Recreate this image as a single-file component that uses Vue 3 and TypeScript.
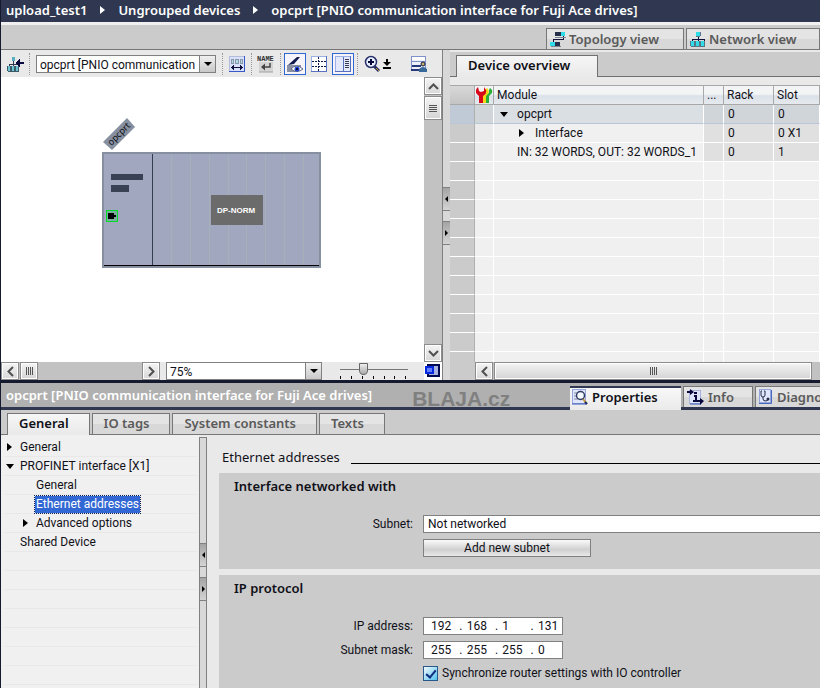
<script setup lang="ts">
import { ref } from 'vue'

interface ModuleRow {
  name: string
  rack: string
  slot: string
  level: number
  arrow: '' | 'open' | 'closed'
}

interface TreeItem {
  label: string
  level: number
  arrow: '' | 'open' | 'closed'
}

const path = ['upload_test1', 'Ungrouped devices', 'opcprt [PNIO communication interface for Fuji Ace drives]']

const modules: ModuleRow[] = [
  { name: 'opcprt', rack: '0', slot: '0', level: 0, arrow: 'open' },
  { name: 'Interface', rack: '0', slot: '0 X1', level: 1, arrow: 'closed' },
  { name: 'IN: 32 WORDS, OUT: 32 WORDS_1', rack: '0', slot: '1', level: 0, arrow: '' },
]
const emptyRows = 16

const tree: TreeItem[] = [
  { label: 'General', level: 0, arrow: 'closed' },
  { label: 'PROFINET interface [X1]', level: 0, arrow: 'open' },
  { label: 'General', level: 1, arrow: '' },
  { label: 'Ethernet addresses', level: 1, arrow: '' },
  { label: 'Advanced options', level: 1, arrow: 'closed' },
  { label: 'Shared Device', level: 0, arrow: '' },
]
const emptyTreeRows = 14
const selectedTree = ref(3)

const tabs = ['General', 'IO tags', 'System constants', 'Texts']
const activeTab = ref('General')

const slotLines = [69, 88, 107, 126, 144, 163, 182, 201]
const ticks = [1, 12, 23, 34, 45, 55, 66]

const device = ref('opcprt [PNIO communication')
const zoom = ref('75%')
const zoomLevel = ref(32)
const subnet = ref('Not networked')
const address = ref(['192', '168', '1', '131'])
const mask = ref(['255', '255', '255', '0'])
const syncRouter = ref(true)
</script>

<template>
  <div class="app">
    <header class="path">
      <template v-for="(part, i) in path" :key="part">
        <span v-if="i > 0" class="path-arrow"></span>
        <span>{{ part }}</span>
      </template>
    </header>

    <nav class="views">
      <button type="button" class="view-tab">
        <svg width="16" height="16" viewBox="0 0 16 16" shape-rendering="crispEdges">
          <path d="M3 12V8h10V5" fill="none" stroke="#10103c" stroke-width="1" />
          <rect x="5" y="1" width="6" height="4" fill="#26304a" /><rect x="11" y="1" width="4" height="4" fill="#30dce8" />
          <rect x="0" y="11" width="5" height="4" fill="#30dce8" /><rect x="5" y="11" width="5" height="4" fill="#26304a" />
          <path d="M5 6h11M1 15.500h10" stroke="#7c8490" />
        </svg>
        Topology view
      </button>
      <button type="button" class="view-tab last">
        <svg width="16" height="16" viewBox="0 0 16 16" shape-rendering="crispEdges">
          <path d="M8 5v5M2 10V8h12v2" fill="none" stroke="#10103c" />
          <rect x="6" y="1" width="4" height="4" fill="#30dce8" /><path d="M6 5h4M10 1v4" stroke="#5a7684" />
          <g fill="#30dce8"><rect x="1" y="10" width="3" height="5" /><rect x="6" y="10" width="3" height="5" /><rect x="11" y="10" width="3" height="5" /></g>
          <path d="M4.500 10v5M9.500 10v5M14.500 10v5M1 15.500h14M.5 10v5M5.500 10v5M10.500 10v5" stroke="#5a7684" />
        </svg>
        Network view
      </button>
    </nav>

    <main class="workspace">
      <section class="device-view">
        <div class="toolbar">
          <button type="button" class="tool" aria-label="Go to parent">
            <svg width="18" height="16" viewBox="0 0 18 16" shape-rendering="crispEdges">
              <path d="M6.500 4v6M2.500 10V8.500h9V10" fill="none" stroke="#303850" />
              <rect x="5" y="1" width="3" height="4" fill="#5ab0c0" />
              <g fill="#6cc4d0"><rect x="1" y="10" width="2" height="5" /><rect x="5" y="10" width="2" height="5" /><rect x="9" y="10" width="2" height="5" /></g>
              <path d="M.5 10v5M3.500 10v5M4.500 10v5M7.500 10v5M8.500 10v5M11.500 10v5M1 15.500h11" stroke="#3c5a68" />
              <path d="M8 7l5-4v3h4v2h-4v3z" fill="#08083c" />
            </svg>
          </button>
          <i class="sep"></i>
          <div class="combo device-combo">
            <select v-model="device" aria-label="Device"><option>opcprt [PNIO communication</option></select>
            <span class="combo-arrow"></span>
          </div>
          <i class="sep"></i>
          <button type="button" class="tool wide" aria-label="Module width">
            <svg width="16" height="16" viewBox="0 0 16 16" shape-rendering="crispEdges">
              <rect x="0" y="0" width="16" height="16" fill="#d8e0fa" /><path d="M.5 15V.5H15" fill="none" stroke="#b4bcdc" />
              <path d="M15.500 0v15.500H0" fill="none" stroke="#3858c8" />
              <g fill="#8898a8"><rect x="2" y="3" width="3" height="5" /><rect x="6" y="3" width="4" height="5" /><rect x="11" y="3" width="3" height="5" /></g>
              <g fill="#b0dce8"><rect x="3" y="4" width="1" height="3" /><rect x="7" y="4" width="2" height="3" /><rect x="12" y="4" width="1" height="3" /></g>
              <path d="M2 11.500h12" stroke="#10103c" /><path d="M4.500 9v5M11.500 9v5M3.500 10v3M12.500 10v3" stroke="#10103c" />
            </svg>
          </button>
          <i class="sep"></i>
          <button type="button" class="tool wide" aria-label="Show labels">
            <svg width="18" height="18" viewBox="0 0 18 18">
              <rect x="2" y="7" width="14" height="10" fill="#d4d4d4" /><path d="M2 17h14" stroke="#a0a0a0" />
              <text x="0" y="6" class="name-glyph">NAME</text>
              <path d="M13 8v4H6" fill="none" stroke="#444" stroke-width="1.500" /><path d="M8 8.500v7L4 12z" fill="#444" />
            </svg>
          </button>
          <i class="sep"></i>
          <button type="button" class="tool on" aria-label="Show addresses">
            <svg width="18" height="18" viewBox="0 0 18 18">
              <path d="M1 10h14v4l-3 3H1z" fill="#8890a4" /><path d="M2 10L11 2h3L8 9z" fill="#10184c" />
              <path d="M5 14q5-6 12 0-6 5-12 0z" fill="#fff" stroke="#606a84" /><circle cx="11" cy="14" r="2.500" fill="#1840d0" /><circle cx="11" cy="14" r="1" />
            </svg>
          </button>
          <button type="button" class="tool" aria-label="Show page breaks">
            <svg width="16" height="16" viewBox="0 0 16 16" shape-rendering="crispEdges">
              <rect width="16" height="16" fill="#fff" /><path d="M.5 15V.5H15" fill="none" stroke="#9cb0e8" /><path d="M15.500 0v15.500H0" fill="none" stroke="#5870c0" />
              <path d="M7.500 1v14" stroke="#10184c" stroke-dasharray="2 1" />
              <path d="M1 5.500h14M1 10.500h14" stroke="#10184c" stroke-dasharray="2 1" />
            </svg>
          </button>
          <button type="button" class="tool on" aria-label="Show table">
            <svg width="16" height="16" viewBox="0 0 16 16" shape-rendering="crispEdges">
              <rect width="16" height="16" fill="#e4e8fc" /><path d="M.5 15V.5H15" fill="none" stroke="#9cb0e8" /><path d="M15.500 0v15.500H0" fill="none" stroke="#5870c0" />
              <path d="M8.500 1v14" stroke="#5870c0" /><path d="M10 3.500h4M10 5.500h4M10 7.500h4M10 9.500h4M10 11.500h4" stroke="#383c50" />
            </svg>
          </button>
          <i class="sep"></i>
          <button type="button" class="tool zoom-tool" aria-label="Zoom">
            <svg width="30" height="18" viewBox="0 0 30 18">
              <path d="M10 11l5 5" stroke="#20285c" stroke-width="3" /><path d="M12 13l3 3" stroke="#c89838" />
              <circle cx="7" cy="7" r="5.500" fill="#e8f0ff" stroke="#28306a" stroke-width="1.500" /><path d="M7 4v6M4 7h6" stroke="#08083c" stroke-width="2" />
              <path d="M22 4h2v3h3l-4 4-4-4h3z" /><path d="M19 13h8" stroke="#000" stroke-width="2" />
            </svg>
          </button>
          <button type="button" class="tool save" aria-label="Save window settings">
            <svg width="16" height="16" viewBox="0 0 16 16">
              <rect x=".5" y=".5" width="14" height="14" fill="#eef0fa" stroke="#8090c8" /><rect x="1" y="1" width="13" height="3" fill="#fff" />
              <path d="M1 5.500h13" stroke="#8090c8" /><path d="M1 10h9M0 14h10" stroke="#28387c" stroke-width="2" /><circle cx="12" cy="8" r="2" fill="#c8b060" stroke="#10184c" />
              <path d="M8 16v-3q4-4 8 0v3z" fill="#386898" />
            </svg>
          </button>
        </div>

        <div class="canvas-row">
          <div class="canvas">
            <svg class="rack" width="219" height="150" viewBox="0 0 219 150">
              <path d="M1 24L25 0l8 9-23 23z" fill="#8790a0" />
              <text x="17" y="19" class="tag" transform="rotate(-45 17 16)">opcprt</text>
              <rect x="1" y="35" width="217" height="114" fill="#a2a7c0" stroke="#8690a0" stroke-width="2" />
              <g shape-rendering="crispEdges">
                <rect v-for="x in slotLines" :key="x" :x="x" y="36" width="1" height="111" fill="#a6b0b8" />
                <rect x="50" y="36" width="1" height="112" fill="#333d50" />
                <rect x="2" y="147" width="215" height="1" />
                <rect x="9" y="56" width="32" height="6" fill="#394255" />
                <rect x="9" y="67" width="18" height="7" fill="#394255" />
                <rect x="4" y="92" width="12" height="12" fill="#00dc28" /><rect x="5" y="93" width="10" height="10" fill="#7cae9c" />
                <rect x="6" y="95" width="6" height="6" /><rect x="12" y="97" width="2" height="2" />
                <rect x="109" y="77" width="52" height="30" fill="#6b6b6b" />
              </g>
              <text x="134" y="95" class="norm">DP-NORM</text>
            </svg>
          </div>
          <div class="vscroll">
            <button type="button" class="sb" aria-label="Scroll up"><svg width="11" height="7"><path d="M1 6l4.500-4.500L10 6" /></svg></button>
            <span class="thumb-v"><i></i><i></i><i></i><i></i></span>
            <button type="button" class="sb end" aria-label="Scroll down"><svg width="11" height="7"><path d="M1 1l4.500 4.500L10 1" /></svg></button>
          </div>
        </div>

        <div class="canvas-foot">
          <div class="hscroll">
            <button type="button" class="sb" aria-label="Scroll left"><svg width="7" height="11"><path d="M6 1L1.500 5.500 6 10" /></svg></button>
            <span class="thumb-h small"><i></i><i></i><i></i><i></i></span>
            <button type="button" class="sb end" aria-label="Scroll right"><svg width="7" height="11"><path d="M1 1l4.500 4.500L1 10" /></svg></button>
          </div>
          <div class="combo zoom-combo">
            <select v-model="zoom" aria-label="Zoom factor"><option>75%</option></select>
            <span class="combo-arrow"></span>
          </div>
          <div class="slider">
            <input v-model.number="zoomLevel" type="range" min="0" max="100" aria-label="Zoom slider" />
            <svg width="68" height="3" shape-rendering="crispEdges"><rect v-for="t in ticks" :key="t" :x="t - 1" width="1" height="3" /></svg>
          </div>
          <button type="button" class="tool overview" aria-label="Overview">
            <svg width="16" height="16" viewBox="0 0 16 16" shape-rendering="crispEdges">
              <rect x="3" y="2" width="11" height="11" fill="#a8b4e0" stroke="#000850" stroke-width="2" />
              <rect x="1" y="4" width="7" height="6" fill="#6080ff" stroke="#0828e0" stroke-width="2" />
            </svg>
          </button>
        </div>
      </section>

      <div class="splitter top-split"><i class="grip left"></i><i class="grip right"></i></div>

      <section class="overview-pane">
        <div class="pane-tabs"><h2>Device overview</h2></div>
        <div class="grid">
          <table>
            <colgroup><col class="c-gutter" /><col class="c-icon" /><col /><col class="c-dots" /><col class="c-rack" /><col class="c-slot" /></colgroup>
            <thead>
              <tr>
                <th></th>
                <th class="icon-cell">
                  <svg width="17" height="16" viewBox="0 0 17 16">
                    <path d="M10 7l3-1V3l1-2q3 2 2 5l-3 3v7h-3z" fill="#28b038" />
                    <path d="M7 7l2-1V3l2-2q3 3 1 6l-2 2v7H7z" fill="#f4d818" />
                    <path d="M2 0Q-1 3 0 6l3 3v7h4V9q4-2 3-6L8 0v4L5 5 3 4z" fill="#d80818" />
                  </svg>
                </th>
                <th>Module</th><th>...</th><th>Rack</th><th>Slot</th>
              </tr>
            </thead>
            <tbody>
              <tr v-for="(m, i) in modules" :key="m.name" :class="{ selected: i === 0 }">
                <td class="gutter"></td><td class="shade"></td>
                <td class="name"><span class="node" :class="'level' + m.level"><i class="arrow" :class="m.arrow"></i>{{ m.name }}</span></td>
                <td class="shade"></td><td class="shade">{{ m.rack }}</td><td class="shade">{{ m.slot }}</td>
              </tr>
              <tr v-for="n in emptyRows" :key="n"><td class="gutter"></td><td></td><td></td><td></td><td></td><td></td></tr>
            </tbody>
          </table>
        </div>
        <div class="grid-scroll">
          <div class="hscroll wide">
            <button type="button" class="sb" aria-label="Scroll table left"><svg width="7" height="11"><path d="M6 1L1.500 5.500 6 10" /></svg></button>
            <span class="thumb-h"><i></i><i></i><i></i><i></i></span>
          </div>
        </div>
      </section>
    </main>

    <section class="inspector">
      <header class="inspector-title">
        <h1>opcprt [PNIO communication interface for Fuji Ace drives]</h1>
        <span class="mark">BLAJA.cz</span>
        <nav class="inspector-tabs">
          <button type="button" class="itab props">
            <svg width="16" height="16" viewBox="0 0 16 16">
              <rect x=".5" y=".5" width="13" height="14" fill="#e0e6fc" stroke="#94a4dc" /><path d="M0 15h14" stroke="#3858b8" />
              <path d="M2 4h4M2 7h3M2 10h4" stroke="#8088a0" /><path d="M11 10l4 5" stroke="#c89828" stroke-width="2" /><path d="M13 13l2 2" stroke="#182870" stroke-width="2" />
              <circle cx="8.500" cy="6.500" r="4" fill="#f4f8ff" stroke="#303c60" stroke-width="1.500" />
            </svg>
            Properties
          </button>
          <button type="button" class="itab info">
            <svg width="17" height="16" viewBox="0 0 17 16">
              <rect x="2.500" y="1.500" width="11" height="13" fill="#dce4fa" stroke="#a8b4dc" /><path d="M3 15h11" stroke="#3858b8" />
              <path d="M0 2h3V0l4 3-4 3V4H0zM10 11h3V9l4 3-4 4v-3h-3z" fill="#08083c" /><path d="M7 7h2v5M6 12h5M7 4h3" fill="none" stroke="#08083c" stroke-width="2" />
            </svg>
            Info
          </button>
          <button type="button" class="itab">
            <svg width="14" height="16" viewBox="0 0 14 16">
              <rect x=".5" y=".5" width="11" height="13" fill="#e0e6fc" stroke="#94a4dc" /><path d="M0 14.500h12.500V1" fill="none" stroke="#4868c0" />
              <path d="M3 2H2v4q0 2 2 2t2-2V2H5M4 8v2q0 2 3 2l2-1" fill="none" stroke="#202c48" /><circle cx="9" cy="10" r="1.500" fill="#202c48" />
            </svg>
            Diagnostics
          </button>
        </nav>
      </header>

      <nav class="page-tabs">
        <button v-for="t in tabs" :key="t" type="button" :class="{ active: t === activeTab }" @click="activeTab = t">{{ t }}</button>
      </nav>

      <div class="inspector-body">
        <ul class="tree">
          <li v-for="(item, i) in tree" :key="i" :class="'indent' + item.level">
            <i class="arrow" :class="item.arrow"></i>
            <button type="button" :class="{ picked: i === selectedTree }" @click="selectedTree = i">{{ item.label }}</button>
          </li>
          <li v-for="n in emptyTreeRows" :key="'e' + n"></li>
        </ul>

        <div class="splitter bottom-split"><i class="grip left"></i><i class="grip right"></i></div>

        <form class="form" @submit.prevent>
          <h2 class="page-title">Ethernet addresses</h2>

          <section class="card">
            <h3>Interface networked with</h3>
            <div class="fields">
              <label for="subnet">Subnet:</label>
              <input id="subnet" v-model="subnet" type="text" class="subnet" />
              <button type="button" class="add">Add new subnet</button>
            </div>
          </section>

          <section class="card grow">
            <h3>IP protocol</h3>
            <div class="fields">
              <label for="ip0">IP address:</label>
              <div class="octets">
                <template v-for="(_, i) in address" :key="i">
                  <span v-if="i > 0">.</span>
                  <input :id="'ip' + i" v-model="address[i]" type="text" :aria-label="'IP address part ' + (i + 1)" />
                </template>
              </div>
              <label for="mask0">Subnet mask:</label>
              <div class="octets">
                <template v-for="(_, i) in mask" :key="i">
                  <span v-if="i > 0">.</span>
                  <input :id="'mask' + i" v-model="mask[i]" type="text" :aria-label="'Subnet mask part ' + (i + 1)" />
                </template>
              </div>
              <label class="check"><input v-model="syncRouter" type="checkbox" />Synchronize router settings with IO controller</label>
            </div>
          </section>
        </form>
      </div>
    </section>
  </div>
</template>

<style>
body {
  margin: 0;
  background: #e9e9e9;
}
</style>

<style scoped>
.app,
.app * {
  box-sizing: border-box;
}
.app {
  --title: 600 13px/18px "Noto Sans", "Open Sans", sans-serif;
  display: grid;
  grid-template-rows: 25px 25px minmax(0, 15fr) minmax(0, 14fr);
  height: 100vh;
  border-left: 1px solid #161a2e;
  overflow: hidden;
  background: #e9e9e9;
  color: #101018;
  font: 12px/18px Roboto, "Open Sans", sans-serif;
}
button,
input,
select {
  margin: 0;
  padding: 0;
  border: 0;
  border-radius: 0;
  font: inherit;
  color: inherit;
  background: none;
}
h1,
h2,
h3 {
  margin: 0;
  font: var(--title);
}
svg {
  display: block;
  flex: none;
}

.path {
  display: flex;
  align-items: center;
  gap: 13px;
  padding: 0 5px 2px;
  background: #2f3850;
  border-bottom: 3px solid #f0f0f0;
  color: #fff;
  font: var(--title);
  white-space: nowrap;
}
.path-arrow {
  border: 4px solid transparent;
  border-left: 5px solid #fff;
  border-right: 0;
}

.views {
  display: flex;
  justify-content: flex-end;
  align-items: flex-end;
  gap: 2px;
  background: #cbcbcb;
  border-bottom: 1px solid #777;
}
.view-tab {
  display: flex;
  align-items: center;
  gap: 3px;
  width: 138px;
  height: 21px;
  padding: 0 3px;
  border: 1px solid #777;
  border-bottom: 0;
  background: linear-gradient(#e4e4e4 50%, #d8d8d8 50%);
  color: #5a5a5a;
  font: var(--title);
  white-space: nowrap;
}
.view-tab.last {
  width: 134px;
}

.workspace {
  display: grid;
  grid-template-columns: minmax(0, 31fr) 8px minmax(0, 26fr);
  min-height: 0;
}
.device-view {
  display: flex;
  flex-direction: column;
  min-height: 0;
}
.toolbar {
  display: flex;
  align-items: center;
  flex: none;
  height: 27px;
  gap: 3px;
  padding: 0 13px 0 5px;
}
.tool {
  display: flex;
  align-items: center;
  justify-content: center;
  flex: none;
  width: 20px;
  height: 22px;
}
.tool.wide {
  width: 22px;
}
.tool.on {
  width: 22px;
  border: 1px solid #3068d0;
  background: #f4f4fa;
}
.tool.zoom-tool {
  width: 36px;
}
.save {
  margin-left: auto;
}
.sep {
  flex: none;
  width: 1px;
  height: 22px;
  border-left: 1px dotted #999;
}
.name-glyph {
  font: bold 7px "Liberation Mono", monospace;
  fill: #333;
}
.combo {
  display: flex;
  flex: none;
  height: 18px;
  border: 1px solid #808080;
  background: #fff;
}
.combo select {
  flex: 1;
  min-width: 0;
  padding-left: 3px;
  appearance: none;
  outline: 0;
  text-overflow: clip;
}
.combo-arrow {
  display: grid;
  place-items: center;
  width: 16px;
  border: 1px solid #808080;
  border-width: 0 0 0 1px;
  background: linear-gradient(#f0f0f0, #c8c8c8);
}
.combo-arrow::after {
  content: "";
  border: 4px solid transparent;
  border-top-color: #000;
  border-bottom: 0;
}
.device-combo {
  width: 180px;
  margin: 0 3px;
}

.canvas-row {
  display: flex;
  flex: 1;
  min-height: 0;
}
.canvas {
  position: relative;
  flex: 1;
  background: #fff;
}
.rack {
  position: absolute;
  left: 101px;
  top: 41px;
}
.tag {
  font: 9px "Open Sans", "Noto Sans", sans-serif;
  text-anchor: middle;
}
.norm {
  font: bold 8px "Liberation Sans", sans-serif;
  fill: #fff;
  text-anchor: middle;
}

.vscroll {
  display: flex;
  flex-direction: column;
  width: 18px;
  gap: 1px;
  background: #c2c2c2;
}
.hscroll {
  display: flex;
  gap: 1px;
  width: 159px;
  height: 18px;
  background: #c2c2c2;
}
.sb {
  display: grid;
  place-items: center;
  flex: none;
  width: 18px;
  height: 18px;
  border: 1px solid #8c8c8c;
  background: linear-gradient(#f4f4f4, #d8d8d8);
  box-shadow: inset 0 0 0 1px #fff;
}
.sb path {
  fill: none;
  stroke: #505050;
  stroke-width: 2;
}
.vscroll .end {
  margin-top: auto;
}
.hscroll .end {
  margin-left: auto;
}
.thumb-v,
.thumb-h {
  display: flex;
  align-items: center;
  justify-content: center;
  border: 1px solid #8c8c8c;
  background: linear-gradient(#f4f4f4, #d4d4d4);
  box-shadow: inset 0 0 0 1px #fff;
}
.thumb-v {
  flex-direction: column;
  gap: 1px;
  height: 24px;
}
.thumb-v i {
  width: 8px;
  height: 1px;
  background: #555;
}
.thumb-h {
  flex: 1;
  gap: 1px;
}
.thumb-h.small {
  flex: none;
  width: 18px;
}
.thumb-h i {
  width: 1px;
  height: 8px;
  background: #555;
}
.canvas-foot {
  display: flex;
  flex: none;
  height: 18px;
}
.zoom-combo {
  width: 156px;
  margin-left: 6px;
}
.slider {
  width: 68px;
  margin-left: 18px;
}
.slider input {
  display: block;
  width: 100%;
  height: 14px;
  appearance: none;
}
.slider input::-webkit-slider-runnable-track {
  height: 12px;
  background: linear-gradient(#777, #777) 0 6px / 100% 1px no-repeat;
}
.slider input::-webkit-slider-thumb {
  appearance: none;
  width: 9px;
  height: 12px;
  background: linear-gradient(#eee, #aaa);
  border: 1px solid #666;
  border-radius: 1px 1px 5px 5px;
}
.overview {
  width: 18px;
  height: 18px;
  margin-left: auto;
  background: #fff;
}

.splitter {
  display: flex;
  flex-direction: column;
  gap: 10px;
  border-left: 1px solid #808080;
  background: #d8d8d8;
}
.top-split {
  padding-top: 137px;
}
.grip {
  display: grid;
  place-items: center;
  height: 24px;
  border: 1px solid #808080;
  border-width: 1px 0;
  background: linear-gradient(#a4a4a4, #d4d4d4);
}
.grip::after {
  content: "";
  border: 3px solid transparent;
}
.grip.left::after {
  border-right-color: #000;
  border-left: 0;
}
.grip.right::after {
  border-left-color: #000;
  border-right: 0;
}

.overview-pane {
  display: flex;
  flex-direction: column;
  min-height: 0;
}
.pane-tabs {
  flex: none;
  height: 27px;
  padding: 5px 0 0 6px;
  background: linear-gradient(#e9e9e9 2px, #cbcbcb 2px, #cbcbcb 26px, #707070 26px);
}
.pane-tabs h2 {
  width: 142px;
  height: 22px;
  padding-left: 11px;
  border: 1px solid #707070;
  border-bottom: 0;
  background: linear-gradient(#f6f6f6, #e9e9e9);
}
.grid {
  flex: 1;
  min-height: 0;
  margin-top: 8px;
  overflow: hidden;
}
table {
  width: 100%;
  table-layout: fixed;
  border-collapse: separate;
  border-spacing: 0;
}
.c-gutter {
  width: 25px;
}
.c-icon {
  width: 19px;
}
.c-dots {
  width: 20px;
}
.c-rack {
  width: 50px;
}
.c-slot {
  width: 46px;
}
th,
td {
  height: 19px;
  padding: 0 3px;
  line-height: 18px;
  text-align: left;
  white-space: nowrap;
  overflow: hidden;
}
th {
  height: 20px;
  border: 1px solid #a8a8a8;
  border-width: 1px 1px 1px 0;
  background: linear-gradient(#f2f4f6 45%, #dbe1e8 55%, #e6eaee);
  font-weight: 400;
}
th:first-child {
  background: linear-gradient(#d8d8d8, #c4c4c4);
}
.icon-cell {
  padding: 0 1px;
}
td {
  border: 1px solid #fff;
  border-width: 0 1px 1px 0;
  background: #f0f0f0;
}
td.name {
  padding-right: 0;
}
td:nth-child(5),
td:nth-child(6) {
  padding-left: 4px;
}
td.gutter {
  background: #cbcbcb;
  border-right-color: #b0b0b0;
}
td.shade {
  background: #e0e0e0;
}
td.shade:nth-child(2) {
  background: #ebebeb;
}
.selected td {
  border-bottom-color: #b8c6d8;
  background: #dadfe3;
}
.selected td.gutter {
  background: #c0cad6;
}
.selected td.shade {
  background: #d0d5d9;
}
.node {
  display: flex;
  align-items: center;
  gap: 9px;
  padding-left: 2px;
}
.node.level1 {
  padding-left: 20px;
}
.arrow {
  display: grid;
  place-items: center;
  flex: none;
  width: 9px;
  height: 9px;
}
.arrow.open::after {
  content: "";
  border: 4px solid transparent;
  border-top: 5px solid #000;
  border-bottom: 0;
}
.arrow.closed::after {
  content: "";
  border: 4px solid transparent;
  border-left: 5px solid #000;
  border-right: 0;
}
.grid-scroll {
  flex: none;
  height: 18px;
  padding-left: 25px;
  background: #cbcbcb;
}
.hscroll.wide {
  width: auto;
  padding-right: 8px;
}

.inspector {
  display: flex;
  flex-direction: column;
  min-height: 0;
  border-top: 3px solid #161a2e;
}
.inspector-title {
  display: flex;
  flex: none;
  height: 27px;
  background: linear-gradient(#b0b0b0 24px, #2f3850 24px);
  overflow: hidden;
}
.inspector-title h1 {
  padding-left: 5px;
  color: #fff;
  line-height: 25px;
  white-space: nowrap;
}
.mark {
  margin-left: 40px;
  color: #808080;
  font: bold 21px/32px "Liberation Sans", sans-serif;
}
.inspector-tabs {
  display: flex;
  gap: 2px;
  flex: 0 0 250px;
  margin-left: auto;
  padding-top: 3px;
  overflow: hidden;
}
.itab {
  display: flex;
  align-items: center;
  gap: 4px;
  flex: none;
  height: 21px;
  padding: 0 3px;
  border: 1px solid #777;
  border-bottom: 0;
  background: linear-gradient(#e4e4e4 50%, #d8d8d8 50%);
  color: #5a5a5a;
  font: var(--title);
}
.itab.props {
  width: 111px;
  height: 24px;
  padding: 0 2px 4px;
  border: 0;
  border-top: 2px solid #2f3850;
  background: linear-gradient(#f8f8f8, #eaeaea);
  color: #101018;
}
.itab.info {
  width: 70px;
}
.page-tabs {
  display: flex;
  align-items: flex-end;
  gap: 2px;
  flex: none;
  height: 25px;
  padding-left: 6px;
  background: linear-gradient(#cbcbcb 24px, #777 24px);
}
.page-tabs button {
  height: 22px;
  padding: 0 20px 2px 11px;
  border: 1px solid #777;
  background: linear-gradient(#e4e4e4 50%, #d8d8d8 50%);
  color: #5a5a5a;
  font: var(--title);
}
.page-tabs .active {
  padding-bottom: 3px;
  border-bottom: 0;
  background: linear-gradient(#f6f6f6, #e9e9e9);
  color: #101018;
}
.inspector-body {
  display: grid;
  grid-template-columns: 198px 8px minmax(0, 1fr);
  flex: 1;
  min-height: 0;
}
.tree {
  min-height: 0;
  margin: 0;
  padding: 3px 2px 0 4px;
  overflow: hidden;
  background: #f0f0f0;
  list-style: none;
}
.tree li {
  display: flex;
  align-items: center;
  gap: 5px;
  height: 19px;
  border-bottom: 1px solid #e8e8e8;
}
.tree .indent1 {
  padding-left: 16px;
}
.tree button {
  padding: 0 1px;
  line-height: 17px;
  text-align: left;
  white-space: nowrap;
}
.tree .picked {
  background: #3268d4;
  color: #fff;
  outline: 1px dotted #102050;
}
.bottom-split {
  margin-top: 2px;
  padding-top: 105px;
  border: 1px solid #808080;
  border-bottom: 0;
}
.form {
  display: flex;
  flex-direction: column;
  gap: 6px;
  min-height: 0;
  padding-left: 12px;
  overflow: hidden;
}
.page-title {
  display: flex;
  align-items: center;
  gap: 11px;
  flex: none;
  height: 32px;
  padding: 12px 0 0 3px;
  font-weight: 400;
  white-space: nowrap;
}
.page-title::after {
  content: "";
  flex: 1;
  height: 13px;
  border-bottom: 1px solid #000;
}
.card {
  flex: none;
  padding: 4px 0 12px 15px;
  background: #cbcbcb;
}
.card.grow {
  flex: 1 0 auto;
}
.fields {
  display: grid;
  grid-template-columns: 179px minmax(0, 1fr);
  gap: 6px 10px;
  align-items: center;
  justify-items: start;
  padding-top: 20px;
}
.fields > label:not(.check) {
  justify-self: end;
}
.subnet {
  justify-self: stretch;
  height: 18px;
  padding: 0 4px;
  border: 1px solid #808080;
  border-right: 0;
  background: #fff;
}
.add,
.check {
  grid-column: 2;
}
.add {
  width: 168px;
  height: 18px;
  border: 1px solid #808080;
  background: linear-gradient(#fafafa, #d0d0d0 60%, #e8e8e8);
  line-height: 16px;
}
.octets {
  display: flex;
  width: 140px;
  height: 18px;
  padding-left: 7px;
  border: 1px solid #808080;
  background: #fff;
}
.octets input {
  width: 24px;
  height: 16px;
  outline: 0;
}
.octets span {
  width: 12px;
  line-height: 16px;
  text-align: center;
}
.check {
  display: flex;
  align-items: center;
  gap: 4px;
  height: 16px;
}
.check input {
  width: 15px;
  height: 15px;
  appearance: none;
  display: grid;
  place-items: center;
  border: 1px solid #28588c;
  background: linear-gradient(135deg, #f4fafc, #50c0ec);
}
.check input:checked::after {
  content: "";
  width: 4px;
  height: 8px;
  border: solid #102c80;
  border-width: 0 2px 2px 0;
  transform: rotate(40deg);
}
</style>
